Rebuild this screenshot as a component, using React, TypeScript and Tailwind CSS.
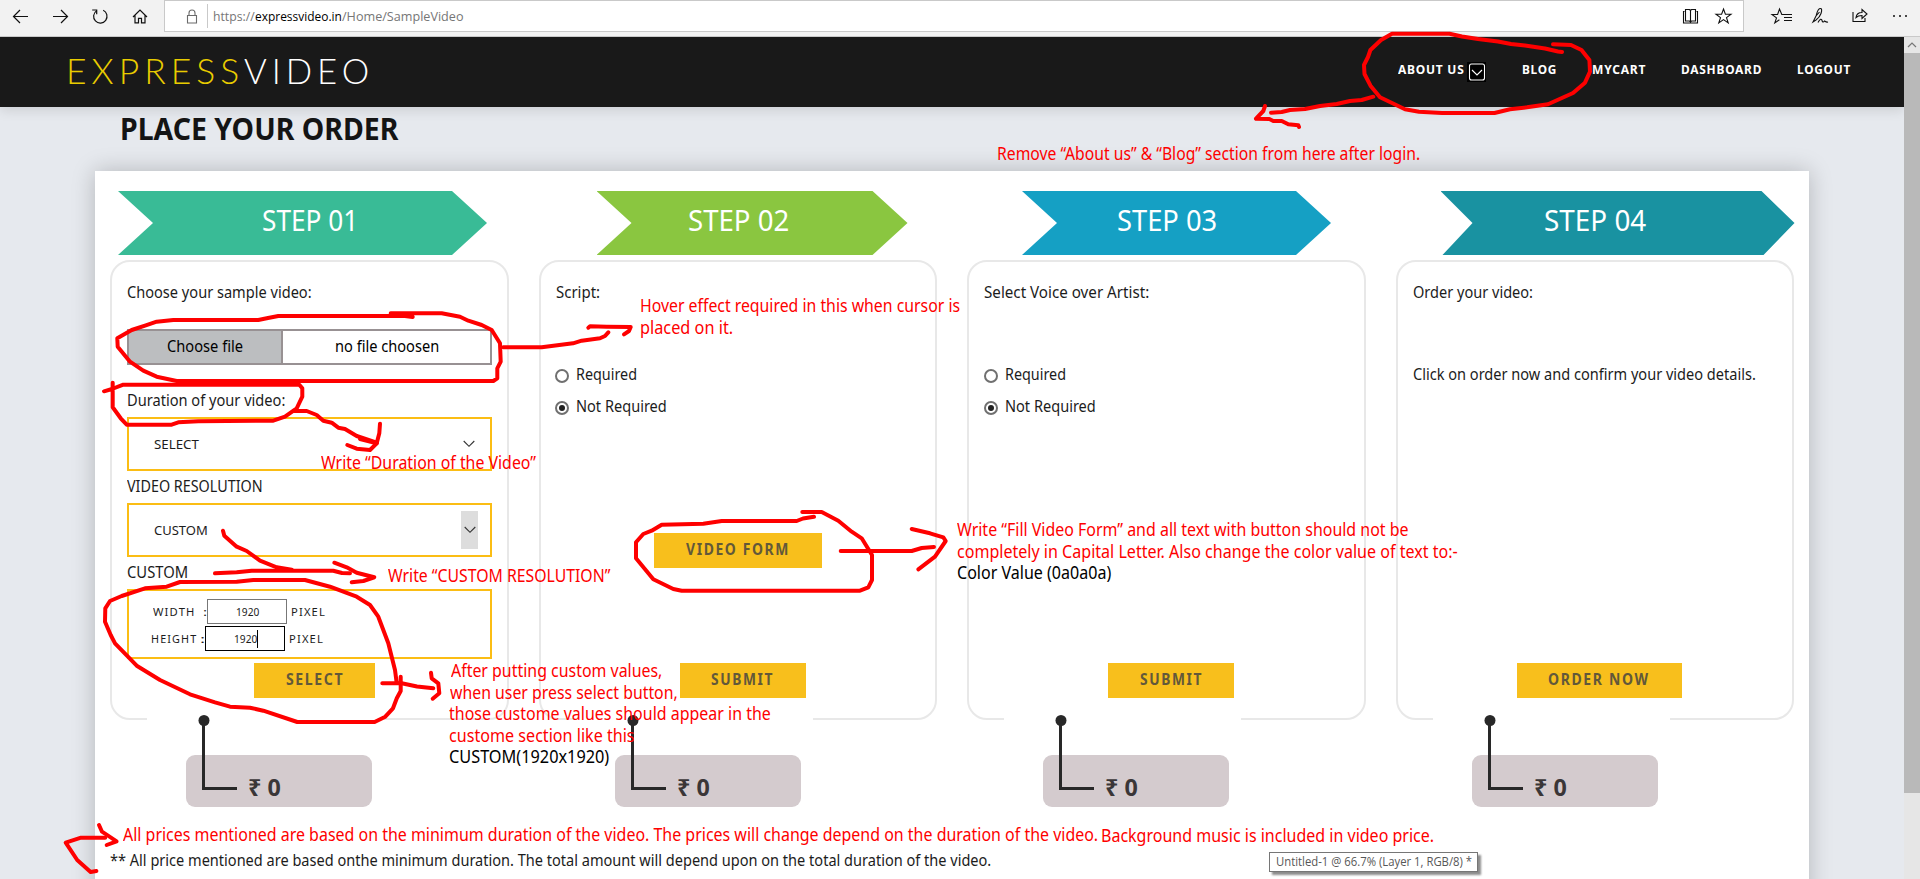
import { useLayoutEffect, useRef, useState } from 'react';

/** Single-line text condensed or widened to fill the width set by its class. */
function Fit({ text, className = '' }: { text: string; className?: string }) {
  const outer = useRef<HTMLSpanElement>(null);
  const inner = useRef<HTMLSpanElement>(null);
  const [scale, setScale] = useState(1);
  useLayoutEffect(() => {
    if (outer.current && inner.current) {
      setScale(outer.current.clientWidth / inner.current.offsetWidth);
    }
  }, [text]);
  return (
    <span ref={outer} className={`block shrink-0 whitespace-nowrap ${className}`}>
      <span ref={inner} className="inline-block origin-left align-top" style={{ transform: `scaleX(${scale})` }}>
        {text}
      </span>
    </span>
  );
}

function BrowserBar() {
  return (
    <div className="flex h-[37px] shrink-0 items-start border-b border-[#c9c9c9] bg-[#f2f2f2]">
      <svg className="h-8 w-[164px] shrink-0" viewBox="0 0 164 32" fill="none" stroke="#111" strokeWidth="1.2">
        <path d="M28 16.5H13.5M20 10l-6.5 6.5L20 23" />
        <path d="M53 16.5h14.500M61 10l6.500 6.500L61 23" />
        <path d="M96 10.400a6.700 6.700 0 1 0 6.500-.4M91.500 9.700H96v4.300" transform="translate(.7 .3)" />
        <path d="M133 17l7-7 7 7M135 15.500v7.300h3.500v-4.500h3v4.500h3.500v-7.300" />
      </svg>
      <div className="flex h-8 w-[1580px] shrink-0 items-center border border-[#c9c9c9] bg-white">
        <svg className="h-5 w-[42px] shrink-0" viewBox="0 0 42 20" fill="none" stroke="#6b6b6b" strokeWidth="1.1">
          <path d="M22.500 9.500h9v7.500h-9zM24 9.500V7a3 3 0 0 1 6 0v2.500" />
        </svg>
        <div className="mr-[5px] h-6 w-px bg-[#c9c9c9]" />
        <div className="flex pt-px font-['Open_Sans',sans-serif] text-[12.500px] leading-5 text-[#767676]">
          <Fit className="w-[42px]" text="https://" />
          <Fit className="w-[87px] text-black" text="expressvideo.in" />
          <Fit className="w-[121px]" text="/Home/SampleVideo" />
        </div>
        <svg className="ml-auto mr-1 h-6 w-[58px] shrink-0" viewBox="0 0 58 24" fill="none" stroke="#111" strokeWidth="1.100">
          <path d="M3.500 7.500h-1v11.500h14V7.500h-1M9.500 6.500l-1-1h-4v11.500h4l1 1 1-1h4V5.500h-4zv11" />
          <path d="M42.500 5l1.900 5.200h5.600l-4.500 3.400 1.700 5.300-4.700-3.300-4.700 3.300 1.700-5.300-4.500-3.400h5.600z" />
        </svg>
      </div>
      <svg className="h-8 w-[176px] shrink-0" viewBox="70 0 176 32" fill="none" stroke="#111" strokeWidth="1.100">
        <path d="M106 14.500h-2.200L101.500 9l-1.900 5.500H94l4.500 3.400-1.700 5 4.600-3.100M105 14.500h9M106 17.500h8M106 20.500h8" transform="translate(4 0)" />
        <path d="M139 22l3-6c1-3 1.500-7 4-7.500 2-.3 2 2 1 5-1 3-3 5-5 6.500l-3 2zM142 16l3.500-4M144 22.500c2-4 3.500-4 4-2 .5 2 1.500 2 2.500.5 1.500 1 2 1.500 3.500 1" />
        <path d="M179 12v9.500h12V18M182 17.500c.5-3.500 3-5 6-5V9.500l5 4.500-5 4.500v-3c-3 0-4.500.5-6 2z" />
        <path d="M219 16h2M225 16h2M231 16h2" strokeWidth="1.700" />
      </svg>
    </div>
  );
}

function Header() {
  return (
    <header className="flex h-[70px] items-center bg-[#191919] pb-[5px] pl-[66px] shadow-[0_3px_12px_rgba(0,0,0,0.12)]">
      <div className="flex font-[Lato,sans-serif] text-[35px] font-light leading-[60px] tracking-[5px]">
        <Fit className="w-[178px] text-[#e9cc00]" text="EXPRESS" />
        <Fit className="w-[130px] text-white" text="VIDEO" />
      </div>
      <nav className="ml-auto mt-px flex h-5 items-center pr-[53px] text-[12.500px] font-bold leading-[18px] tracking-[0.8px] text-white">
        <Fit className="w-[67px]" text="ABOUT US" />
        <span className="ml-[2px] mt-[3px] flex h-5 w-[19px] items-center justify-center bg-black">
          <svg className="h-5 w-[18px]" viewBox="0 0 18 20" fill="none" stroke="#fff" strokeWidth="1.100">
            <rect x="1.500" y="2" width="15" height="16" rx="2" />
            <path d="M4 8l5 5 5-5" />
          </svg>
        </span>
        <Fit className="ml-[36px] w-[35px]" text="BLOG" />
        <Fit className="ml-[35px] w-[54px]" text="MYCART" />
        <Fit className="ml-[35px] w-[81px]" text="DASHBOARD" />
        <Fit className="ml-[35px] w-[54px]" text="LOGOUT" />
      </nav>
    </header>
  );
}

function Button({ text, textClass, className }: { text: string; textClass: string; className: string }) {
  return (
    <button className={`flex h-[35px] shrink-0 justify-center bg-[#f8bf1c] text-[15.500px] font-bold leading-[33px] tracking-[1.800px] text-[#62583a] ${className}`}>
      <Fit className={textClass} text={text} />
    </button>
  );
}

function Chevron() {
  return (
    <svg className="h-2 w-3" viewBox="0 0 12 8" fill="none" stroke="#333" strokeWidth="1.100">
      <path d="M.7 1l5.300 5.300L11.300 1" />
    </svg>
  );
}

function Radio({ checked, text, className }: { checked?: boolean; text: string; className: string }) {
  return (
    <label className="flex h-6 items-center">
      <span className="mr-[7px] mt-[4px] flex size-[14px] items-center justify-center rounded-full border-2 border-[#707070]">
        {checked && <span className="size-[6px] rounded-full bg-[#222]" />}
      </span>
      <Fit className={className} text={text} />
    </label>
  );
}

function Choices() {
  return (
    <div className="-ml-[0.500px] mt-[58px] flex flex-col gap-2">
      <Radio className="w-[61px]" text="Required" />
      <Radio className="w-[91px]" text="Not Required" checked />
    </div>
  );
}

function SizeRow({ name, nameClass, colonClass, inputClass, focus }: { name: string; nameClass: string; colonClass: string; inputClass: string; focus?: boolean }) {
  return (
    <div className="flex h-[25px] items-center">
      <Fit className={`tracking-[1.200px] ${nameClass}`} text={name} />
      <Fit className={colonClass} text=":" />
      <span className={`flex h-[25px] w-20 items-center justify-center border ${inputClass}`}>
        <Fit className="w-[23px] leading-[23px]" text="1920" />
        {focus && <span className="-mr-px h-[18px] w-px bg-black" />}
      </span>
      <Fit className="ml-[4px] w-[35px] tracking-[1.200px]" text="PIXEL" />
    </div>
  );
}

function Price() {
  return (
    <div className="relative -mt-[6px] ml-[37px] h-[93px] w-[237px] bg-white pl-[39px] pt-[41px]">
      <div className="h-[52px] w-[186px] rounded-[9px] bg-[#d4cbce] pl-[62px] text-[24px] font-bold leading-[63px] text-[#3a3637]">
        <Fit className="w-[33px]" text="₹ 0" />
      </div>
      <svg className="absolute left-0 top-0 h-[93px] w-[100px]" viewBox="0 0 100 93" fill="none" stroke="#282828" strokeWidth="3">
        <circle cx="57" cy="6.500" r="5.500" fill="#282828" stroke="none" />
        <path d="M56.500 5v69.500h33.500" />
      </svg>
    </div>
  );
}

function Step({ title, arrow, titleClass, children }: { title: string; arrow: string; titleClass: string; children: React.ReactNode }) {
  return (
    <section className="px-[15px]">
      <div className={`h-16 text-[29.500px] leading-[58px] text-white ${arrow}`}>
        <Fit className={titleClass} text={title} />
      </div>
      <div className="mt-[5px] flex h-[460px] flex-col items-start rounded-[20px] border-2 border-[#e8e8e8] px-[15px] pb-5 pt-[18px] text-[16px] leading-6">
        {children}
      </div>
      <Price />
    </section>
  );
}

const STROKES = [
  '1562,52 1558,51.500 1545,48.5 1525,45.5 1511,44 1498,41.5 1478,39 1462,36.5 1449.5,33.7 1392,33.7 1381,40 1370.4,50 1368,57 1364,65 1364.500,74 1370.500,85.7 1380,97.3 1405,109.3 1419,111.7 1442,113 1494.500,113 1510,109.3 1527,107.3 1548,104.3 1573,93 1585,82.7 1590,71.7 1589.4,60 1581.5,50 1571,45 1553,44.3',
  '1373.3,96.7 1361.7,100 1350,101 1336.7,104 1320,106 1305,109 1290,110 1281.7,112 1271,112.700',
  '1265,106 1263.3,111 1256,118.7 1269.3,119 1273.3,121 1281.7,121 1288.3,124.3 1298.3,125.3 1299,127',
  '412.7,317 403,315.7 278.3,316 268,318 258.3,320 173.3,320 156.7,321.7 145,325.7 131.7,330 117.3,338.3 117.7,346.7 130,361.7 143.3,370.7 156.7,376.7 176.7,381 493.3,381 497.3,378.3 497.3,368.3 500.7,361.7 500,343.3 491.7,330 481.7,325 468.3,320.7 460,316.7 441.7,313.3 390.7,313.3',
  '503.3,347.3 541.7,347.3 573,343.3 581.7,340.7 600,338.3 605,336 608.3,332.3',
  '588.3,327.7 590,326.3 606.7,326.7 630.7,327 629,331 624,334.3',
  '104,391.3 112,389 123.3,384.7 299.3,384.7 302.3,388.3 302.3,396.7 296.7,408.3 285,416.7 273.3,420.7 198.3,421.3 178.3,422.3 171.7,424.7 126.7,424.7 120.7,418.3 112.7,407.3 112.7,382.7',
  '294,411 306.7,411 316.7,415 323.3,420.7 331.7,422.7 338.3,427.7 345,429 356.7,436 376.7,442.7',
  '360,439 376.7,443.3',
  '380,423.7 379.3,433.3 376.7,443.3 370,450 356.7,448.7 347.3,445',
  '223,530.7 224.3,535.7 236.7,546.7 246.7,551 260,560.7 276.7,567.3 291.7,569.7',
  '215,573.3 236.7,572.3 251.7,570.7 333.3,570.7 342,573 350,573.3',
  '334.3,562.7 346.7,567.3 356.7,572.7 374.3,577.3 363.3,581 351.7,582.3',
  '400.7,676.7 400.7,691 396.8,698.3 393,708.3 385.3,716.7 374.6,722 297.3,722 263.3,710.7 250,707.7 230,706.7 215,702.3 190,694.3 160,680 136.7,665.7 115,643.3 110.7,635 105,621.7 105.3,608.3 110,601 121.7,596 145,588.3 166.7,586.7 180,582 236.7,581.7 253.3,580 305,580 330,586.7 356.7,596.7 370,605 378.3,616.7 388.3,643.3 395,670 396.7,683',
  '382.3,683.3 401.7,683.3 417,686.500 433.3,688.3',
  '431,672.7 431.7,678.3 438.3,683.3 439.3,693.3 432.7,698.7',
  '814,516.7 803,518.500 796.7,521 721.7,521 703.3,523.7 661.7,524.7 651.7,530.7 643.3,534 636,542.3 636,558.3 653.3,579.3 673.3,589 681.7,590.7 860,590.7 868.3,587.3 872,580 872,555 861.7,538.3 851.7,531.7 838.3,520.7 821.7,512 802.3,512',
  '840.7,551 911.7,551 921.7,548 934,547',
  '911.7,529 930,533.3 943.3,537.3 945.7,541 935,556.7 918.3,569.3',
  '96.4,871 90.6,872 77.2,860 65.7,842.7 81,837.7 105.2,837.7',
  '99,825 102,831.7 116.6,841.3 106.7,845',
];

const NOTES = [
  { text: 'Remove “About us” & “Blog” section from here after login.', at: 'left-[997px] top-[142px] w-[423px]' },
  { text: 'Hover effect required in this when cursor is', at: 'left-[640px] top-[294px] w-[320px]' },
  { text: 'placed on it.', at: 'left-[640px] top-[316px] w-[93px]' },
  { text: 'Write “Duration of the Video”', at: 'left-[321px] top-[451px] w-[215px]' },
  { text: 'Write “CUSTOM RESOLUTION”', at: 'left-[388px] top-[564px] w-[222px]' },
  { text: 'After putting custom values,', at: 'left-[451px] top-[659px] w-[211px]' },
  { text: 'when user press select button,', at: 'left-[450px] top-[681px] w-[228px]' },
  { text: 'those custome values should appear in the', at: 'left-[449px] top-[702px] w-[322px]' },
  { text: 'custome section like this', at: 'left-[449px] top-[724px] w-[186px]' },
  { text: 'CUSTOM(1920x1920)', at: 'left-[449px] top-[745px] w-[160px] text-black' },
  { text: 'Write “Fill Video Form” and all text with button should not be', at: 'left-[957px] top-[518px] w-[452px]' },
  { text: 'completely in Capital Letter. Also change the color value of text to:-', at: 'left-[957px] top-[540px] w-[501px]' },
  { text: 'Color Value (0a0a0a)', at: 'left-[957px] top-[561px] w-[154px] text-black' },
  { text: 'All prices mentioned are based on the minimum duration of the video. The prices will change depend on the duration of the video.', at: 'left-[123px] top-[823px] w-[975px]' },
  { text: 'Background music is included in video price.', at: 'left-[1101px] top-[824px] w-[333px]' },
];

function Markup() {
  return (
    <div className="pointer-events-none absolute inset-0 text-[17.500px] leading-[22px] text-[#fe0000]">
      <svg className="absolute inset-0 h-[879px] w-[1920px]" viewBox="0 0 1920 879" fill="none" stroke="#fe0000" strokeWidth="4" strokeLinecap="round" strokeLinejoin="round">
        {STROKES.map((points) => (
          <polyline key={points} points={points} />
        ))}
      </svg>
      {NOTES.map((n) => (
        <Fit key={n.text} className={`absolute ${n.at}`} text={n.text} />
      ))}
      <div className="absolute left-[1269px] top-[852px] h-5 w-[209px] border border-[#767676] bg-white pl-[6px] font-['Open_Sans',sans-serif] text-[12px] leading-[18px] text-[#575757] shadow-[3px_3px_2px_rgba(0,0,0,0.45)]">
        <Fit className="w-[196px]" text="Untitled-1 @ 66.7% (Layer 1, RGB/8) *" />
      </div>
    </div>
  );
}

export default function App() {
  return (
    <div className="relative flex h-[879px] w-[1920px] flex-col overflow-hidden bg-[#e6e9ee] font-['Noto_Sans',sans-serif] text-[#1c1c1c]">
      <BrowserBar />
      <div className="flex min-h-0 flex-1">
        <div className="w-[1904px] overflow-hidden">
          <Header />
          <h1 className="h-16 pl-[120px] text-[29.500px] font-bold leading-[43px] text-[#141414]">
            <Fit className="w-[278px]" text="PLACE YOUR ORDER" />
          </h1>
          <main className="ml-[95px] h-[760px] w-[1714px] bg-white pt-5 shadow-[0_0_22px_rgba(0,0,0,0.22)]">
            <div className="grid grid-cols-4">
              <Step
                title="STEP 01"
                arrow="ml-[8px] w-[369px] bg-[#39bb96] pl-[144px] [clip-path:polygon(0_0,334px_0,100%_50%,334px_100%,0_100%,35px_50%)]"
                titleClass="w-[96px]"
              >
                <Fit className="w-[185px]" text="Choose your sample video:" />
                <div className="mt-[25px] flex h-9 w-[365px] shrink-0 border-2 border-[#989193] leading-[30px] text-black">
                  <div className="flex w-[154px] justify-center border-r-2 border-[#989193] bg-[#bcbec0]">
                    <Fit className="w-[76px]" text="Choose file" />
                  </div>
                  <div className="flex flex-1 justify-center">
                    <Fit className="w-[104px]" text="no file choosen" />
                  </div>
                </div>
                <Fit className="mt-[23px] w-[158px]" text="Duration of your video:" />
                <div className="mt-[5px] flex h-[54px] w-[365px] shrink-0 items-center border-2 border-[#fbbd14] pl-[25px] pr-[15px] text-[13px]">
                  <Fit className="w-[45px]" text="SELECT" />
                  <span className="ml-auto">
                    <Chevron />
                  </span>
                </div>
                <Fit className="mt-[3px] w-[136px] text-[15.500px]" text="VIDEO RESOLUTION" />
                <div className="mt-[5px] flex h-[54px] w-[365px] shrink-0 items-center border-2 border-[#fbbd14] pl-[25px] pr-3 text-[13px]">
                  <Fit className="w-[54px]" text="CUSTOM" />
                  <span className="ml-auto flex h-[38px] w-[17px] items-center justify-center bg-[#ddd]">
                    <Chevron />
                  </span>
                </div>
                <Fit className="mt-[3px] w-[61px] text-[15.500px]" text="CUSTOM" />
                <div className="mt-[5px] flex h-[70px] w-[365px] shrink-0 flex-col gap-[2px] border-2 border-[#fbbd14] pl-[22px] pt-2 text-[11.500px]">
                  <SizeRow name="WIDTH" nameClass="ml-[2px] w-[43px]" colonClass="ml-[7px] w-[4px]" inputClass="border-[#777]" />
                  <SizeRow name="HEIGHT" nameClass="w-[46px]" colonClass="ml-[3px] w-[5px]" inputClass="border-black" focus />
                </div>
                <Button className="mt-1 ml-[127px] w-[121px]" textClass="w-[58px]" text="SELECT" />
              </Step>
              <Step
                title="STEP 02"
                arrow="ml-[58px] w-[311px] bg-[#8ac640] pl-[91px] [clip-path:polygon(0_0,276px_0,100%_50%,276px_100%,0_100%,35px_50%)]"
                titleClass="w-[101px]"
              >
                <Fit className="w-[44px]" text="Script:" />
                <Choices />
                <Button className="mt-[115px] ml-[98px] w-[168px]" textClass="w-[104px]" text="VIDEO FORM" />
                <Button className="ml-[124px] mt-auto w-[126px]" textClass="w-[63px]" text="SUBMIT" />
              </Step>
              <Step
                title="STEP 03"
                arrow="ml-[55px] w-[309px] bg-[#15a0c4] pl-[95px] [clip-path:polygon(0_0,274px_0,100%_50%,274px_100%,0_100%,35px_50%)]"
                titleClass="w-[100px]"
              >
                <Fit className="w-[165px]" text="Select Voice over Artist:" />
                <Choices />
                <Button className="ml-[124px] mt-auto w-[126px]" textClass="w-[63px]" text="SUBMIT" />
              </Step>
              <Step
                title="STEP 04"
                arrow="ml-[45px] w-[354px] bg-[#1992a1] pl-[103px] [clip-path:polygon(0_0,321px_0,100%_50%,323px_100%,2px_100%,32px_50%)]"
                titleClass="w-[102px]"
              >
                <Fit className="w-[120px]" text="Order your video:" />
                <Fit className="mt-[58px] w-[343px]" text="Click on order now and confirm your video details." />
                <Button className="ml-[104px] mt-auto w-[165px]" textClass="w-[102px]" text="ORDER NOW" />
              </Step>
            </div>
            <p className="pl-[15px] pt-[41px] text-[15.500px] leading-6">
              <Fit className="w-[881px]" text="** All price mentioned are based onthe minimum duration. The total amount will depend upon on the total duration of the video." />
            </p>
          </main>
        </div>
        <div className="flex w-4 flex-col bg-[#e6e6e6]">
          <svg className="h-4 w-4" viewBox="0 0 16 16" fill="none" stroke="#777" strokeWidth="1.200">
            <path d="M4 10l4-4 4 4" />
          </svg>
          <div className="h-[740px] bg-[#b9b9b9]" />
        </div>
      </div>
      <Markup />
    </div>
  );
}
